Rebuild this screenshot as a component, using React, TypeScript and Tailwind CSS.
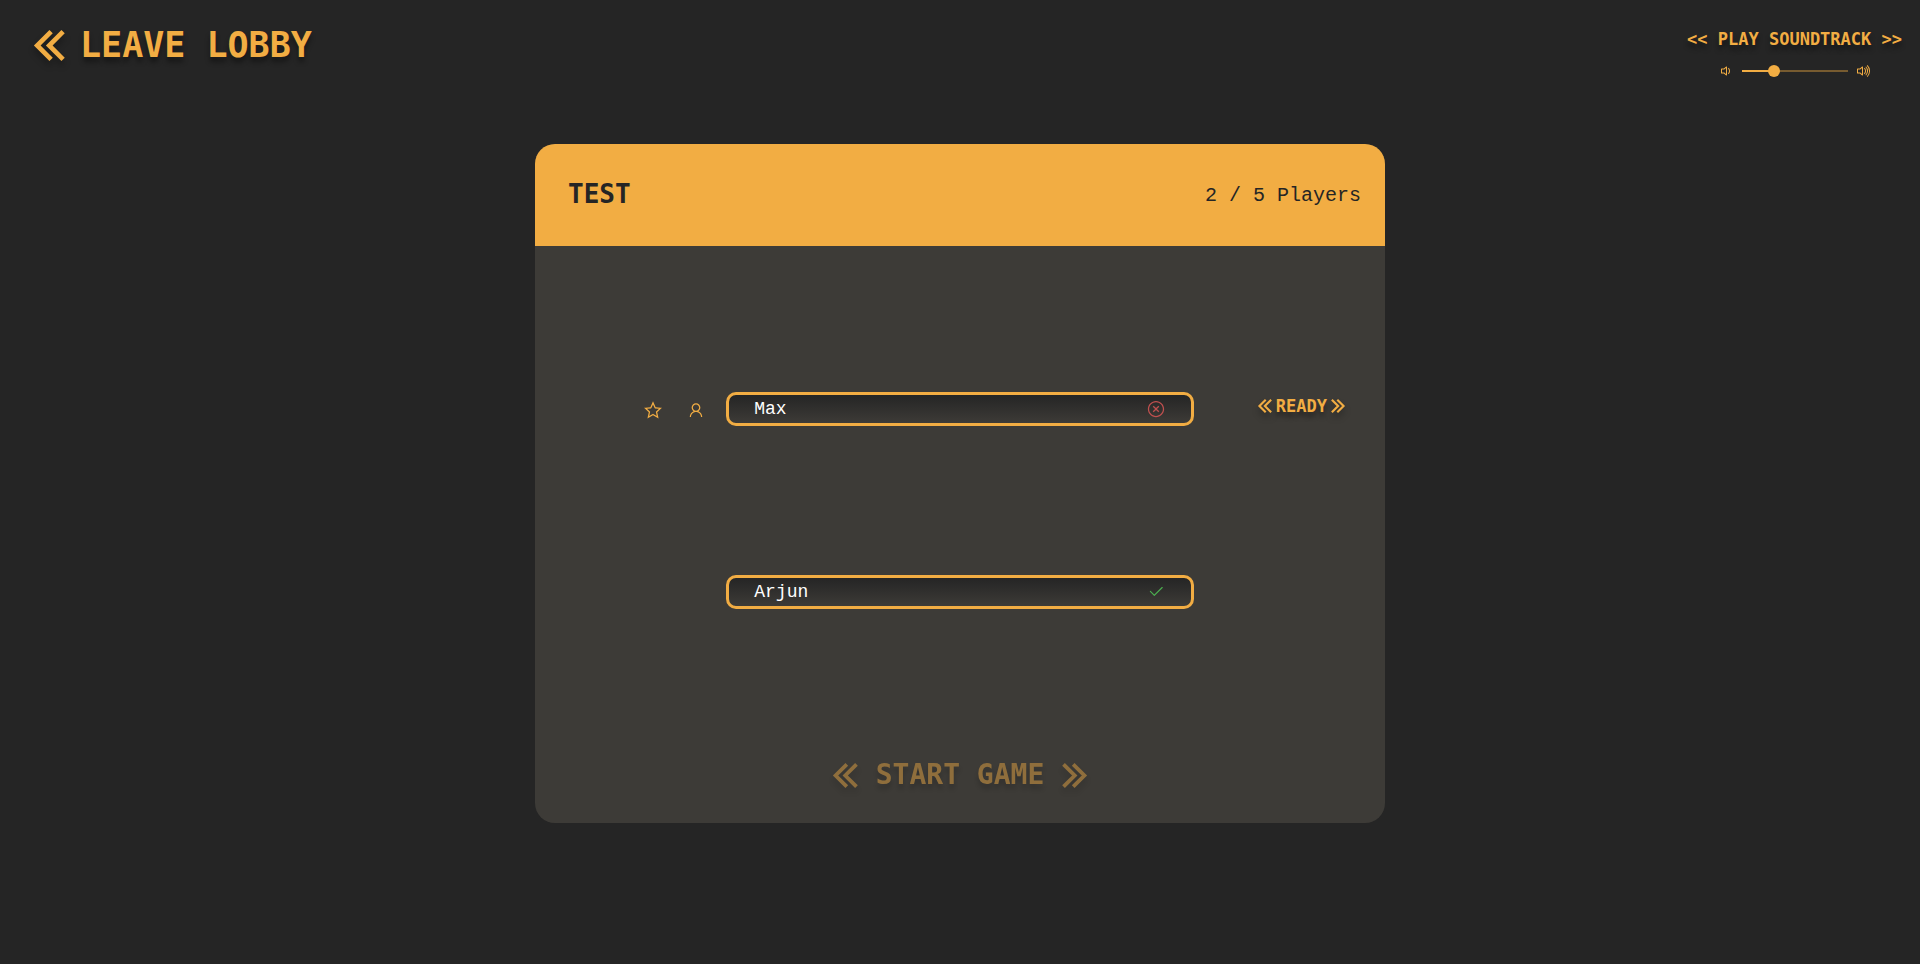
import { useState } from "react";
import { BsCheck2, BsVolumeDown, BsVolumeUp } from "react-icons/bs";
import { LiaStar, LiaTimesCircle, LiaUser } from "react-icons/lia";

const display = "font-['DejaVu_Sans_Mono',monospace] font-bold uppercase whitespace-nowrap";
const shadow = "[text-shadow:0_5px_5px_rgba(0,0,0,0.4)]";

function Chevrons({ className = "" }: { className?: string }) {
  return (
    <svg
      viewBox="0 0 31 31"
      aria-hidden="true"
      className={`shrink-0 overflow-visible drop-shadow-[0_5px_3px_rgba(0,0,0,0.3)] ${className}`}
      fill="none"
      stroke="currentColor"
      strokeWidth="4.7"
    >
      <path d="M17.1 1.6 3.2 15.5l13.9 13.9M29.1 1.6 15.2 15.5l13.9 13.9" />
    </svg>
  );
}

function Soundtrack() {
  const [volume, setVolume] = useState(28);
  return (
    <div className="flex flex-col items-center gap-3">
      <button type="button" className={`${display} ${shadow} text-[17px] leading-6`}>
        &lt;&lt; Play Soundtrack &gt;&gt;
      </button>
      <div className="flex items-center gap-2">
        <BsVolumeDown size={16} />
        <input
          type="range"
          aria-label="Volume"
          min={0}
          max={100}
          value={volume}
          onChange={(e) => setVolume(Number(e.target.value))}
          className="h-0.5 w-[106px] appearance-none [&::-webkit-slider-thumb]:size-3 [&::-webkit-slider-thumb]:appearance-none [&::-webkit-slider-thumb]:rounded-full [&::-webkit-slider-thumb]:bg-[#f2ad43]"
          style={{
            background: `linear-gradient(to right, #f2ad43 ${volume}%, #775b30 ${volume}%)`,
          }}
        />
        <BsVolumeUp size={16} />
      </div>
    </div>
  );
}

function PlayerRow({ name, ready, host, self }: { name: string; ready: boolean; host?: boolean; self?: boolean }) {
  return (
    <li className="grid grid-cols-[1fr_55%_1fr] items-center">
      <div className="flex justify-end gap-[23px] pr-5 pt-0.5">
        {host && <LiaStar size={20} aria-label="Host" />}
        {self && <LiaUser size={20} aria-label="You" />}
      </div>
      <div className="flex h-[34px] items-center justify-between rounded-[10px] border-[3px] border-[#f2ad43] bg-linear-to-b from-[#252525] to-[#3d3b37] px-[25px] font-['Liberation_Mono',monospace] text-lg text-white">
        <span>{name}</span>
        {ready ? (
          <BsCheck2 size={18} className="mx-px text-[#4caf50]" aria-label="Ready" />
        ) : (
          <LiaTimesCircle size={20} className="text-[#c0504f]" aria-label="Not ready" />
        )}
      </div>
      <div className="flex justify-end pr-10 pb-1.5">
        {self && (
          <button type="button" className={`${display} ${shadow} flex items-center gap-1 text-[17px] leading-6`}>
            <Chevrons className="size-3.5" />
            Ready
            <Chevrons className="size-3.5 -scale-x-100" />
          </button>
        )}
      </div>
    </li>
  );
}

export default function App() {
  return (
    <div className="flex min-h-screen flex-col bg-[#252525] text-[#f2ad43]">
      <header className="flex h-36 items-start justify-between pt-6 pr-[18px] pl-[34px]">
        <button type="button" className={`${display} ${shadow} flex items-center gap-[15px] text-[35px] leading-[42px]`}>
          <Chevrons className="size-[31px]" />
          Leave Lobby
        </button>
        <div className="pt-[3px]">
          <Soundtrack />
        </div>
      </header>

      <main className="mx-auto w-full max-w-[850px] overflow-hidden rounded-[20px] bg-[#3d3b37]">
        <div className="flex h-[102px] items-center justify-between bg-[#f2ad43] pr-6 pl-[33px] text-[#252525]">
          <h1 className={`${display} pb-0.5 text-[26px] leading-8`}>Test</h1>
          <p className="pt-0.5 font-['Liberation_Mono',monospace] text-xl">2 / 5 Players</p>
        </div>
        <div className="flex flex-col items-center pt-[146px] pb-7">
          <ul className="flex w-full flex-col gap-[149px]">
            <PlayerRow name="Max" ready={false} host self />
            <PlayerRow name="Arjun" ready />
          </ul>
          <button
            type="button"
            disabled
            className={`${display} ${shadow} mt-[146px] flex items-center gap-[18px] text-[28px] leading-10 opacity-45`}
          >
            <Chevrons className="size-[25px]" />
            Start Game
            <Chevrons className="size-[25px] -scale-x-100" />
          </button>
        </div>
      </main>
    </div>
  );
}
